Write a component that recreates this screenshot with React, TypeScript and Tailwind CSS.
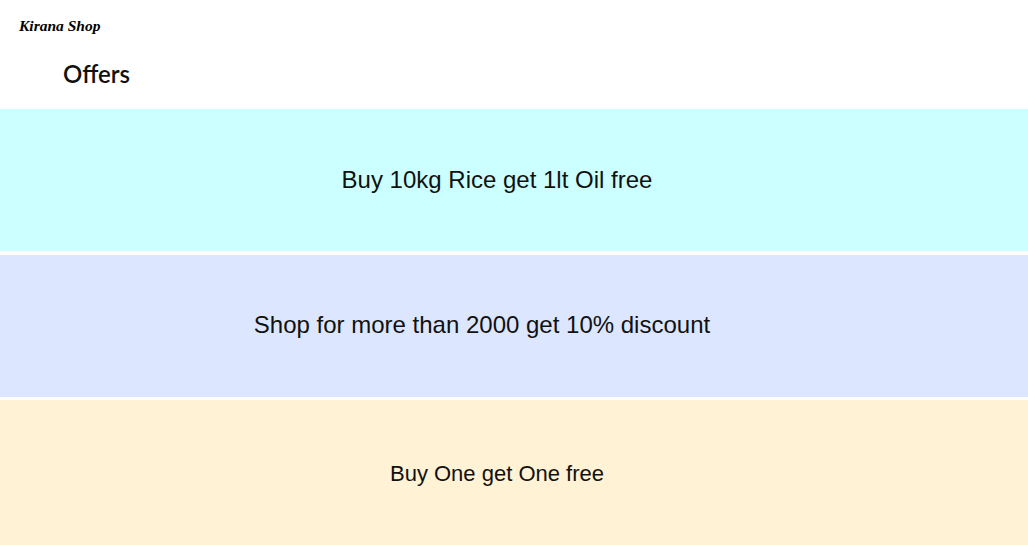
const offers = [
  { text: 'Buy 10kg Rice get 1lt Oil free', bg: 'bg-[#ccffff]', pad: 'h-[142px] pr-[34px]', size: 'text-[24px]' },
  { text: 'Shop for more than 2000 get 10% discount', bg: 'bg-[#dce6ff]', pad: 'h-[142px] pr-[64px] pb-[2px]', size: 'text-[24px]' },
  { text: 'Buy One get One free', bg: 'bg-[#fff2d5]', pad: 'h-[150px] pr-[34px] pt-[2px] pb-[6px]', size: 'text-[22px]' },
]

export default function App() {
  return (
    <div className="min-h-screen bg-white">
      <header className="px-[19px] pt-[16px]">
        <div className="text-[15.5px] font-bold italic leading-[20px] text-black [font-family:'Liberation_Serif',serif]">
          Kirana Shop
        </div>
      </header>
      <h2 className="pl-[63px] pt-[22px] pb-[19px] text-[24px] font-semibold leading-[32px] text-[#111] [font-family:Lato,sans-serif]">
        Offers
      </h2>
      <div className="flex flex-col gap-[3.5px]">
        {offers.map((o) => (
          <div
            key={o.text}
            className={`flex items-center justify-center ${o.bg} ${o.pad}`}
          >
            <p className={`${o.size} text-[#111] [font-family:'Liberation_Sans',Arial,sans-serif]`}>
              {o.text}
            </p>
          </div>
        ))}
      </div>
    </div>
  )
}
